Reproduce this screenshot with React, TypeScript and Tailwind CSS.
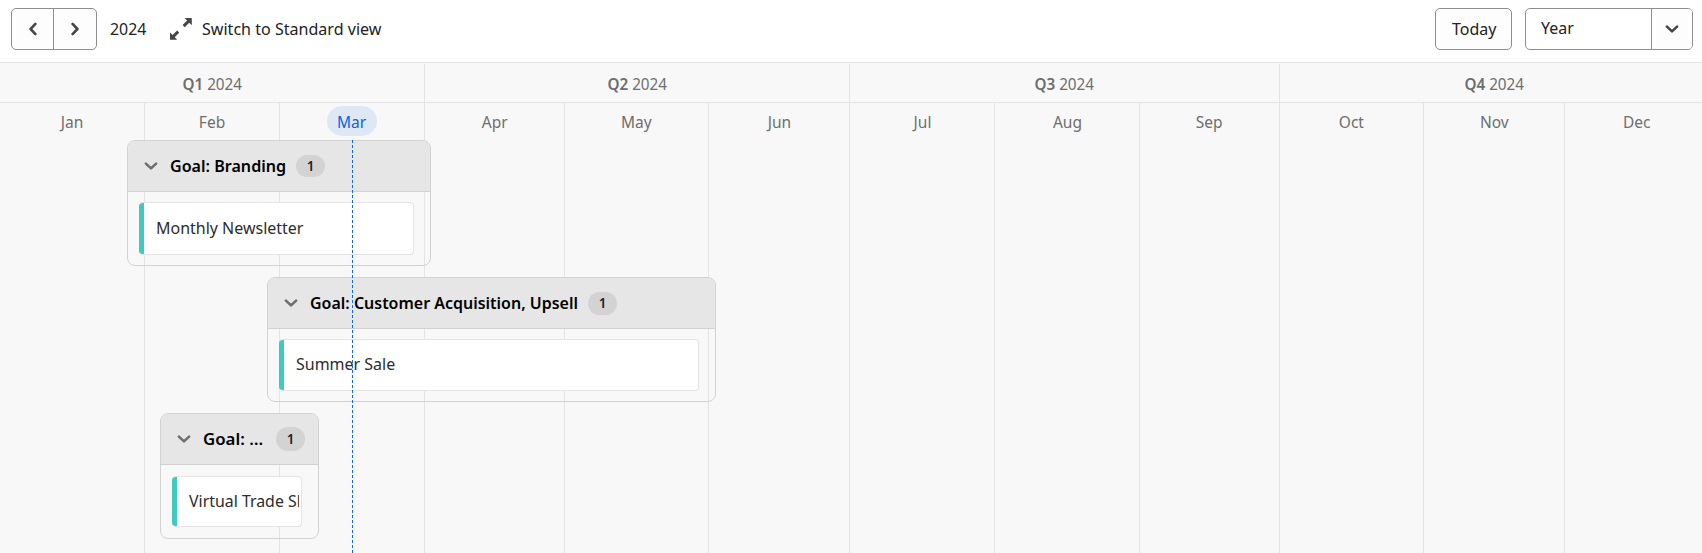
import type { ReactNode } from "react";

type Month = { name: string; width: string; current?: boolean };

const quarters: { name: string; width: string; months: Month[] }[] = [
  { name: "Q1", width: "w-[425px]", months: [
    { name: "Jan", width: "w-[145px]" },
    { name: "Feb", width: "w-[135px]" },
    { name: "Mar", width: "w-[145px]", current: true },
  ] },
  { name: "Q2", width: "w-[425px]", months: [
    { name: "Apr", width: "w-[140px]" },
    { name: "May", width: "w-[144px]" },
    { name: "Jun", width: "w-[141px]" },
  ] },
  { name: "Q3", width: "w-[430px]", months: [
    { name: "Jul", width: "w-[145px]" },
    { name: "Aug", width: "w-[145px]" },
    { name: "Sep", width: "w-[140px]" },
  ] },
  { name: "Q4", width: "w-[430px]", months: [
    { name: "Oct", width: "w-[144px]" },
    { name: "Nov", width: "w-[141px]" },
    { name: "Dec", width: "w-[145px]" },
  ] },
];

function Chevron({ className }: { className: string }) {
  return (
    <svg viewBox="0 0 14 8" className={`h-2 w-3.5 shrink-0 ${className}`} fill="none" stroke="currentColor" strokeWidth="2.6" strokeLinecap="round" strokeLinejoin="round">
      <path d="M1.9 1.6 7 6.4l5.1-4.8" />
    </svg>
  );
}

function Label({ box, scale, children }: { box: string; scale: string; children: ReactNode }) {
  return (
    <span className={`block shrink-0 whitespace-nowrap ${box}`}>
      <span className={`inline-block origin-left ${scale}`}>{children}</span>
    </span>
  );
}

function Goal({ place, title, titleBox, titleScale, header, card, item, itemScale, badge }: {
  place: string; title: string; titleBox: string; titleScale: string; header: string;
  card: string; item: string; itemScale: string; badge: string;
}) {
  return (
    <section className={`shrink-0 overflow-hidden rounded-lg border border-[#d2d2d2] ${place}`}>
      <header className={`flex items-center border-b border-[#d2d2d2] bg-[#e6e6e6] pl-4 ${header}`}>
        <Chevron className="text-[#6e6e6e]" />
        <h3 className="ml-3 text-[16.5px] leading-6 font-semibold text-black">
          <Label box={titleBox} scale={titleScale}>{title}</Label>
        </h3>
        <span className={`flex w-[29px] items-center justify-center rounded-full bg-[#d3d3d3] text-[13.5px] font-semibold text-[#222] ${badge}`}>1</span>
      </header>
      <div className={`ml-[11px] flex items-center overflow-hidden rounded-[4px] border border-l-0 border-[#e4e4e4] bg-white ${card}`}>
        <span className="w-[5px] shrink-0 self-stretch bg-[#3fcabf]" />
        <div className="mr-0.5 ml-3 overflow-hidden pb-0.5 text-[17px] text-[#2c2c2c]">
          <Label box="w-auto" scale={itemScale}>{item}</Label>
        </div>
      </div>
    </section>
  );
}

export default function App() {
  return (
    <main className="flex h-[553px] w-full flex-col overflow-hidden bg-[#f8f8f8] font-['Noto_Sans',sans-serif] text-[17px] text-[#222]">
      <div className="flex h-[63px] shrink-0 items-start border-b border-[#e4e4e4] bg-white pt-2 pr-[9px] pl-[11px]">
        <div className="flex h-[42px] w-[86px] overflow-hidden rounded-[5px] border border-[#8e8e8e] bg-[#fdfdfd] text-[#464646]">
          <button className="flex w-[42px] items-center justify-center border-r border-[#8e8e8e]"><Chevron className="rotate-90" /></button>
          <button className="flex flex-1 items-center justify-center"><Chevron className="-rotate-90" /></button>
        </div>
        <div className="ml-[13px] flex h-[42px] items-center">
          <Label box="w-9" scale="scale-x-[0.935]">2024</Label>
          <svg viewBox="0 0 22 22" className="ml-[24px] h-[22px] w-[22px]" fill="#464646">
            <path d="M14.6 0H21.3a.5.5 0 0 1 .5.5V7.200L19.200 4.700 14.700 9.200 12.600 7.100 17.100 2.600ZM7.200 21.800H.5a.5.5 0 0 1-.5-.5V14.600L2.600 17.100 7.100 12.600 9.200 14.700 4.700 19.200Z" />
          </svg>
          <div className="ml-[10px]"><Label box="w-[180px]" scale="scale-x-[0.945]">Switch to Standard view</Label></div>
        </div>
        <button className="ml-auto flex h-[42px] w-[77px] items-center rounded-[5px] border border-[#8e8e8e] bg-[#fdfdfd] pl-[15.5px]">
          <Label box="w-[44px]" scale="scale-x-[0.94]">Today</Label>
        </button>
        <div className="ml-[13px] flex h-[42px] w-[168px] overflow-hidden rounded-[5px] border border-[#8e8e8e]">
          <div className="flex w-[125px] items-center pb-0.5 pl-[15px]"><Label box="w-8" scale="scale-x-[0.94]">Year</Label></div>
          <button className="flex flex-1 items-center justify-center border-l border-[#8e8e8e] bg-[#fdfdfd] text-[#464646]"><Chevron className="" /></button>
        </div>
      </div>

      <div className="relative flex flex-1 flex-col">
        <div className="flex h-[490px] shrink-0">
          {quarters.map((q) => (
            <div key={q.name} className={`shrink-0 ${q.width}`}>
              <div className="h-10 border-b border-[#e4e4e4] pt-px">
                <div className="flex h-full items-center justify-center border-r border-[#e4e4e4] text-[16.5px] text-[#6e6e6e]">
                  <span className="inline-block scale-x-[0.925] pt-0.5"><b className="font-semibold">{q.name}</b> 2024</span>
                </div>
              </div>
              <div className="flex h-[450px]">
                {q.months.map((m) => (
                  <div key={m.name} className={`flex shrink-0 items-start justify-center border-r border-[#e4e4e4] pt-[3px] text-[16.5px] ${m.width}`}>
                    <span className={m.current ? "flex h-[30px] w-[50px] items-center justify-center rounded-full bg-[#dee8f5] text-[#0d62e0]" : "flex h-[30px] items-center text-[#6e6e6e]"}>
                      <span className="inline-block scale-x-[0.94] pt-0.5">{m.name}</span>
                    </span>
                  </div>
                ))}
              </div>
            </div>
          ))}
        </div>

        <div className="absolute inset-0 flex flex-col items-start gap-[11px] pt-[77px]">
          <Goal place="ml-[127px] h-[126px] w-[304px]" header="h-[51px]" title="Goal: Branding" titleBox="w-[126px]" titleScale="scale-x-[0.975]" badge="h-[22px]" card="mt-[10px] h-[53px] w-[275px]" item="Monthly Newsletter" itemScale="scale-x-[0.94]" />
          <Goal place="ml-[267px] h-[125px] w-[449px]" header="h-[51px]" title="Goal: Customer Acquisition, Upsell" titleBox="w-[278px]" titleScale="scale-x-[0.968]" badge="h-[23px]" card="mt-[10px] h-[52px] w-[420px]" item="Summer Sale" itemScale="scale-x-[0.94]" />
          <Goal place="ml-[160px] h-[126px] w-[159px]" header="h-[51px]" title="Goal: …" titleBox="w-[73px]" titleScale="scale-x-[1.02]" badge="h-[24px]" card="mt-[11px] h-[51px] w-[130px]" item="Virtual Trade Show" itemScale="scale-x-[0.935]" />
        </div>
        <div className="absolute top-[77px] bottom-0 left-[352px] w-px bg-[repeating-linear-gradient(to_bottom,#0d6ae6_0_3px,transparent_3px_5px)]" />
      </div>
    </main>
  );
}
